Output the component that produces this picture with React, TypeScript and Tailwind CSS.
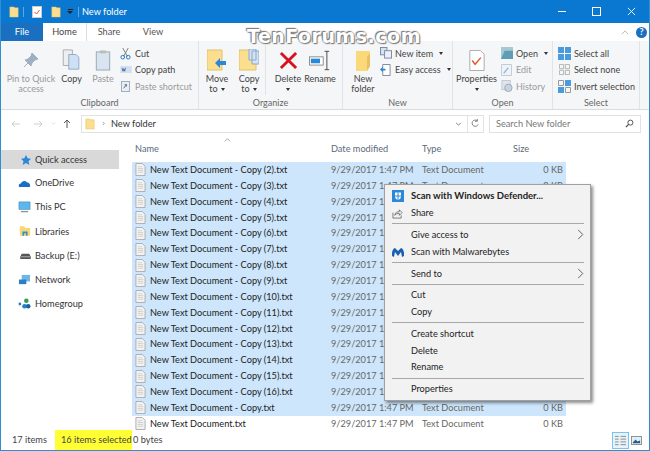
import React from 'react';

const FolderIcon = ({ className }: { className?: string }) => (
  <svg viewBox="0 0 12 14" className={className}>
    <path d="M1 1h5l1 1h4v11H1z" fill="#fbdf8e" stroke="#e3c06a" strokeWidth="0.6" />
  </svg>
);

const DocIcon = () => (
  <svg viewBox="0 0 12 14" className="w-[11px] h-[13px] shrink-0">
    <path d="M1 .5h7l3 3v10H1z" fill="#f4f4f4" stroke="#a9a9a9" />
    <path d="M3 4h5M3 6h6M3 8h6M3 10h6" stroke="#c4c4c4" strokeWidth="0.8" />
  </svg>
);

const Caret = () => <span className="inline-block ml-[3px] align-middle w-0 h-0 border-x-[2px] border-x-transparent border-t-[3px] border-t-[#333]" />;

// large ribbon button: icon on top, one or two lines below
function BigButton({ icon, lines, w, muted, caretBelow }: { icon: React.ReactNode; lines: React.ReactNode[]; w: string; muted?: boolean; caretBelow?: boolean }) {
  return (
    <div className={`flex flex-col items-center shrink-0 ${w} ${muted ? 'text-[#9a9a9a]' : 'text-[#444]'}`}>
      <div className="h-[26px] shrink-0 flex items-end justify-center">{icon}</div>
      <div className="mt-[3px] text-center leading-[10px] whitespace-nowrap">
        {lines.map((l, i) => <div key={i}>{l}</div>)}
        {caretBelow && <div className="-ml-[3px]"><Caret /></div>}
      </div>
    </div>
  );
}

function SmallButton({ icon, label, muted, caret }: { icon: React.ReactNode; label: string; muted?: boolean; caret?: boolean }) {
  return (
    <div className={`flex items-center h-[16.500px] gap-[3px] whitespace-nowrap ${muted ? 'text-[#9a9a9a]' : 'text-[#444]'}`}>
      <span className="w-[13px] h-[13px] flex items-center justify-center shrink-0">{icon}</span>
      {label}
      {caret && <Caret />}
    </div>
  );
}

function Group({ label, w, children }: { label: string; w: string; children: React.ReactNode }) {
  return (
    <div className={`flex flex-col shrink-0 border-r border-[#e1e3e6] h-full ${w}`}>
      <div className="flex-1 flex pt-[4px] min-h-0">{children}</div>
      <div className="h-[12px] text-center text-[#666] leading-[12px]">{label}</div>
    </div>
  );
}

const names = ['(2)', '(3)', '(4)', '(5)', '(6)', '(7)', '(8)', '(9)', '(10)', '(11)', '(12)', '(13)', '(14)', '(15)', '(16)'];
const files = [
  ...names.map((n) => ({ name: `New Text Document - Copy ${n}.txt`, selected: true })),
  { name: 'New Text Document - Copy.txt', selected: true },
  { name: 'New Text Document.txt', selected: false },
];

const navItems: { label: string; icon: React.ReactNode }[] = [
  { label: 'OneDrive', icon: <svg viewBox="0 0 14 10" className="w-[13px] h-[9px]"><path d="M1 9c-1-2 0-4 2-4 1-3 5-4 7-1 2 0 4 2 3 5z" fill="#1a6fc4" /></svg> },
  { label: 'This PC', icon: <svg viewBox="0 0 14 13" className="w-[13px] h-[12px]"><rect x="1" y="1" width="12" height="8" fill="#5cb8ec" stroke="#3d7fa8" strokeWidth="0.6" /><path d="M3 11.500h8" stroke="#8a9aa5" strokeWidth="1.500" /></svg> },
  { label: 'Libraries', icon: <svg viewBox="0 0 14 13" className="w-[12px] h-[12px]"><path d="M1 1h5l1 2h6v9H1z" fill="#f7d774" /><path d="M4 12V7h6v5H8V9H6v3z" fill="#2f8fd8" /></svg> },
  { label: 'Backup (E:)', icon: <svg viewBox="0 0 14 8" className="w-[11px] h-[6px]"><path d="M2 1h10l2 4v3H0V5z" fill="#555" /><path d="M1 5h12" stroke="#ccc" /></svg> },
  { label: 'Network', icon: <svg viewBox="0 0 14 13" className="w-[13px] h-[12px]"><rect x="4" y="1" width="9" height="7" fill="#6fb6e6" /><rect x="1" y="6" width="8" height="5" fill="#2a7fc4" /></svg> },
  { label: 'Homegroup', icon: <svg viewBox="0 0 14 13" className="w-[13px] h-[12px]"><circle cx="2" cy="6.500" r="1.500" fill="#2a7fc4" /><circle cx="9" cy="3" r="2.500" fill="#2e9e5b" /><circle cx="7" cy="9" r="2.500" fill="#2a7fc4" /><circle cx="11" cy="9" r="2.500" fill="#1c5fa8" /></svg> },
];

const MenuSep = () => <div className="h-px bg-[#a8a8a8] ml-[7px] mr-[6px] my-[2.100px]" />;

function MenuItem({ label, bold, icon, sub }: { label: string; bold?: boolean; icon?: React.ReactNode; sub?: boolean }) {
  return (
    <div className={`h-[16.700px] flex items-center text-[#222] whitespace-nowrap ${bold ? 'font-bold text-[9.500px]' : 'text-[9.200px]'}`}>
      <span className="w-[26px] pl-[7px] shrink-0 flex items-center">{icon}</span>
      <span className="flex-1">{label}</span>
      {sub && (
        <svg viewBox="0 0 7 12" className="w-[7px] h-[11px] mr-[6px]"><path d="M1 1l5 5-5 5" fill="none" stroke="#555" /></svg>
      )}
    </div>
  );
}

export default function App() {
  return (
    <div className="relative w-[650px] h-[451px] overflow-hidden bg-white flex flex-col border-x border-b border-[#2f8fd0] text-[9.200px] font-['Lato','Open_Sans',sans-serif] text-[#333]">
      {/* Title bar */}
      <div className="h-[23px] shrink-0 bg-[#0a78d0] flex items-center pl-[8px] text-white">
        <FolderIcon className="w-[10px] h-[12px]" />
        <span className="w-px h-[10px] bg-[#5aa8e4] ml-[4px]" />
        <svg viewBox="0 0 10 12" className="w-[10px] h-[12px] ml-[8px]"><rect x="0.500" y="0.500" width="9" height="11" fill="#fff" stroke="#ccc" /><path d="M2.500 6l2 2 3-4" stroke="#e0592a" fill="none" /></svg>
        <FolderIcon className="w-[10px] h-[12px] ml-[9px]" />
        <span className="ml-[6px] flex flex-col items-center gap-[1px]">
          <span className="w-[5px] h-px bg-[#222]" />
          <span className="w-0 h-0 border-x-[3px] border-x-transparent border-t-[3px] border-t-[#222]" />
        </span>
        <span className="w-px h-[10px] bg-[#5aa8e4] ml-[5px]" />
        <span className="ml-[3px] text-[9.200px]">New folder</span>
        <div className="ml-auto flex items-center">
          <div className="w-[34px] flex justify-center"><span className="w-[8px] h-px bg-white" /></div>
          <div className="w-[34px] flex justify-center"><span className="w-[9px] h-[9px] border border-white" /></div>
          <div className="w-[36px] flex justify-center">
            <svg viewBox="0 0 10 10" className="w-[9px] h-[9px]"><path d="M1 1l8 8M9 1l-8 8" stroke="#fff" strokeWidth="1" /></svg>
          </div>
        </div>
      </div>

      {/* Tabs */}
      <div className="h-[18px] shrink-0 flex items-center bg-white text-[#555] relative">
        <div className="w-[42px] h-full bg-[#1a6fc0] text-white flex items-center justify-center">File</div>
        <div className="w-[44px] h-full flex items-center justify-center border-r border-[#dcdcdc] text-[#444]">Home</div>
        <div className="w-[44px] text-center">Share</div>
        <div className="w-[44px] text-center">View</div>
        <div className="ml-auto flex items-center gap-[7px] pr-[2px]">
          <svg viewBox="0 0 10 6" className="w-[8px] h-[5px]"><path d="M1 5l4-4 4 4" fill="none" stroke="#aaa" /></svg>
          <span className="w-[11px] h-[11px] rounded-full bg-[#1a6fc0] text-white text-[9px] font-bold flex items-center justify-center">?</span>
        </div>
      </div>

      {/* Ribbon */}
      <div className="h-[69px] shrink-0 flex bg-[#f5f6f7] border-b border-[#dadbdc] text-[9px] pr-[10px]">
        <Group label="Clipboard" w="w-[198px]">
          <div className="w-[5px]" />
          <BigButton w="w-[50px]" muted lines={['Pin to Quick', 'access']} icon={<svg viewBox="0 0 16 16" className="w-[16px] h-[16px] mb-[3px]"><path d="M9 1l6 6-3 1-3 3-1 3-6-6 3-1 3-3zM5 11l-4 4" fill="#9fb0c0" stroke="#9fb0c0" /></svg>} />
          <BigButton w="w-[31px]" lines={['Copy']} icon={<svg viewBox="0 0 20 24" className="w-[19px] h-[22px]"><path d="M1 1h10v17H1z" fill="#eee" stroke="#aaa" /><path d="M7 6h8l3 3v13H7z" fill="#cfe0f5" stroke="#8aa9cc" /></svg>} />
          <BigButton w="w-[32px]" muted lines={['Paste']} icon={<svg viewBox="0 0 16 22" className="w-[16px] h-[21px]"><rect x="1" y="2" width="14" height="19" fill="#d8e4f0" stroke="#9aa8b5" /><rect x="5" y="0.500" width="6" height="3" fill="#bbb" /></svg>} />
          <div className="flex flex-col">
            <SmallButton label="Cut" icon={<svg viewBox="0 0 12 14" className="w-[11px] h-[13px]"><path d="M3 1l5 9M9 1L4 10" stroke="#777" /><circle cx="3" cy="11" r="2" fill="none" stroke="#1a6fc0" /><circle cx="9" cy="11" r="2" fill="none" stroke="#1a6fc0" /></svg>} />
            <SmallButton label="Copy path" icon={<svg viewBox="0 0 13 8" className="w-[12px] h-[7px]"><rect width="13" height="8" fill="#cfe0f5" /><path d="M2 2l1 4 1-3 1 3 1-4" stroke="#246" fill="none" strokeWidth="0.700" /></svg>} />
            <SmallButton muted label="Paste shortcut" icon={<svg viewBox="0 0 10 12" className="w-[9px] h-[11px]"><rect x="0.500" y="0.500" width="9" height="11" fill="#e8eef5" stroke="#9aa8b5" /><path d="M3 8l3-4M4 4h2v2" stroke="#567" fill="none" /></svg>} />
          </div>
        </Group>
        <Group label="Organize" w="w-[144px]">
          <div className="w-[1px]" />
          <BigButton w="w-[34px]" lines={['Move', <>to<Caret /></>]} icon={<svg viewBox="0 0 20 22" className="w-[20px] h-[22px]"><path d="M0 1h15v20H0z" fill="#fbdf8e" stroke="#e3c06a" /><path d="M8 14l5-5v3h6v4h-6v3z" fill="#2b88d8" /></svg>} />
          <BigButton w="w-[30px]" lines={['Copy', <>to<Caret /></>]} icon={<svg viewBox="0 0 20 22" className="w-[20px] h-[22px]"><path d="M0 1h17v20H0z" fill="#fbdf8e" stroke="#e3c06a" /><path d="M10 0h7v11h-7zM13 2h7v13h-7z" fill="#d4e2f3" stroke="#8aa9cc" /></svg>} />
          <div className="w-[4px] h-[50px] ml-[1px] border-l border-[#e1e3e6]" />
          <BigButton w="w-[38px]" lines={['Delete']} caretBelow icon={<svg viewBox="0 0 20 20" className="w-[19px] h-[19px] mb-[1px]"><path d="M2 2l16 16M18 2L2 18" stroke="#d8121d" strokeWidth="3" /></svg>} />
          <BigButton w="w-[26px]" lines={['Rename']} icon={<svg viewBox="0 0 24 22" className="w-[22px] h-[21px]"><rect x="0.500" y="7" width="15" height="9" fill="#fff" stroke="#888" /><rect x="2" y="9" width="10" height="5" fill="#2b88d8" /><path d="M17 1h5M19.500 1v20M17 21h5" stroke="#444" /></svg>} />
        </Group>
        <Group label="New" w="w-[110px]">
          <div className="w-[4px]" />
          <BigButton w="w-[32px]" lines={['New', 'folder']} icon={<svg viewBox="0 0 14 20" className="w-[14px] h-[20px]"><path d="M0 0h14v15l-3 5H0z" fill="#fbd978" /><path d="M14 2v13l-3 5V6z" fill="#e8c15c" /></svg>} />
          <div className="flex flex-col">
            <SmallButton caret label="New item" icon={<svg viewBox="0 0 13 13" className="w-[12px] h-[12px]"><rect x="0.500" y="0.500" width="7" height="8" fill="#d4e2f3" stroke="#789" /><rect x="5" y="4" width="7.500" height="8" fill="#eef" stroke="#789" /></svg>} />
            <SmallButton caret label="Easy access" icon={<svg viewBox="0 0 12 13" className="w-[11px] h-[12px]"><path d="M3 .5h8v12H3z" fill="#fff" stroke="#789" /><path d="M0 6l3-3v2h3v2H3v2z" fill="#2b88d8" /></svg>} />
          </div>
        </Group>
        <Group label="Open" w="w-[100px]">
          <BigButton w="w-[47px]" lines={['Properties']} caretBelow icon={<svg viewBox="0 0 16 22" className="w-[16px] h-[21px]"><path d="M.5.500h11l4 4v17H.5z" fill="#fff" stroke="#aaa" /><path d="M3 11l3 4 6-7" fill="none" stroke="#e0592a" strokeWidth="1.500" /></svg>} />
          <div className="flex flex-col">
            <SmallButton caret label="Open" icon={<svg viewBox="0 0 13 13" className="w-[12px] h-[12px]"><rect width="13" height="13" fill="#a9c8d4" /><path d="M0 13l4-9h9v9z" fill="#5f9cb5" /></svg>} />
            <SmallButton muted label="Edit" icon={<svg viewBox="0 0 12 13" className="w-[11px] h-[12px]"><path d="M.5.500h11v12H.5z" fill="#eef3f8" stroke="#bcc8d4" /><path d="M3 10l5-6" stroke="#9cbad6" strokeWidth="1.500" /></svg>} />
            <SmallButton muted label="History" icon={<svg viewBox="0 0 13 13" className="w-[12px] h-[12px]"><rect x="1" y="0.500" width="9" height="10" fill="#dfe5ec" stroke="#bcc8d4" /><circle cx="8" cy="8.500" r="4" fill="#c7d3de" stroke="#9aa8b5" /></svg>} />
          </div>
        </Group>
        <Group label="Select" w="w-[87px]">
          <div className="flex flex-col pl-[5px]">
            <SmallButton label="Select all" icon={<svg viewBox="0 0 13 13" className="w-[13px] h-[13px]"><path d="M0 0h6v6H0zM7 0h6v6H7zM0 7h6v6H0zM7 7h6v6H7z" fill="#4a9ade" /></svg>} />
            <SmallButton label="Select none" icon={<svg viewBox="0 0 13 13" className="w-[11px] h-[11px]"><path d="M.5.500h5v5h-5zM7.500.500h5v5h-5zM.5 7.500h5v5h-5zM7.500 7.500h5v5h-5z" fill="none" stroke="#aaa" /></svg>} />
            <SmallButton label="Invert selection" icon={<svg viewBox="0 0 13 13" className="w-[13px] h-[13px]"><path d="M7 0h6v6H7zM0 7h6v6H0z" fill="#4a9ade" /><path d="M.5.500h5v5h-5zM7.500 7.500h5v5h-5z" fill="none" stroke="#999" /></svg>} />
          </div>
        </Group>
      </div>

      {/* Address bar */}
      <div className="h-[25px] shrink-0 flex items-center pt-[2px]">
        <div className="w-[80px] shrink-0 flex items-center pl-[10px] text-[#c8c8c8]">
          <svg viewBox="0 0 10 10" className="w-[10px] h-[10px]"><path d="M9 5H1M4 2L1 5l3 3" fill="none" stroke="#cfcfcf" /></svg>
          <svg viewBox="0 0 10 10" className="w-[10px] h-[10px] ml-[12px]"><path d="M1 5h8M6 2l3 3-3 3" fill="none" stroke="#cfcfcf" /></svg>
          <svg viewBox="0 0 6 4" className="w-[5px] h-[3px] ml-[8px]"><path d="M1 1l2 2 2-2" fill="none" stroke="#cfcfcf" /></svg>
          <svg viewBox="0 0 10 10" className="w-[10px] h-[10px] ml-[6px]"><path d="M5 9V1M2 4l3-3 3 3" fill="none" stroke="#555" /></svg>
        </div>
        <div className="w-[403px] shrink-0 h-[18px] border border-[#e2e2e2] flex items-center pl-[3px] text-[#333]">
          <FolderIcon className="w-[10px] h-[12px]" />
          <svg viewBox="0 0 4 6" className="w-[3px] h-[5px] ml-[7px]"><path d="M1 1l2 2-2 2" fill="none" stroke="#777" /></svg>
          <span className="ml-[6px]">New folder</span>
          <svg viewBox="0 0 8 5" className="ml-auto w-[7px] h-[4px]"><path d="M1 1l3 3 3-3" fill="none" stroke="#666" /></svg>
          <span className="ml-[5px] w-px h-full bg-[#e2e2e2]" />
          <svg viewBox="0 0 10 10" className="w-[9px] h-[9px] mx-[3px]"><path d="M8 6a3.500 3.500 0 1 1-1-4M7 0v2.500H4.500" fill="none" stroke="#777" /></svg>
        </div>
        <div className="ml-[5px] w-[152px] h-[18px] border border-[#e2e2e2] flex items-center pl-[6px] pr-[6px] text-[#777]">
          Search New folder
          <svg viewBox="0 0 10 10" className="ml-auto w-[9px] h-[9px]"><circle cx="6" cy="4" r="2.800" fill="none" stroke="#444" /><path d="M4 6L1 9" stroke="#444" strokeWidth="1.300" /></svg>
        </div>
      </div>

      {/* Main */}
      <div className="flex-1 flex min-h-0">
        <div className="w-[131px] shrink-0 pt-[15px] pr-[13px]">
          <div className="h-[19px] bg-[#d9d9d9] flex items-center text-[#333]">
            <span className="w-[34px] flex justify-end pr-[4px]">
              <svg viewBox="0 0 12 12" className="w-[10px] h-[10px]"><path d="M6 0l2 4 4 .5-3 3 1 4.500-4-2.500L2 12l1-4.500-3-3L4 4z" fill="#2b88d8" /></svg>
            </span>
            Quick access
          </div>
          <div className="mt-[2px]">
            {navItems.map((n) => (
              <div key={n.label} className="h-[24.200px] flex items-center text-[#333]">
                <span className="w-[34px] flex justify-end pr-[4px] shrink-0">{n.icon}</span>
                {n.label}
              </div>
            ))}
          </div>
        </div>
        <div className="flex-1 min-w-0 flex flex-col">
          <div className="h-[27px] shrink-0 flex items-center text-[#5a6a7a] relative">
            <span className="w-[199px] pl-[3px]">Name</span>
            <span className="w-[91px]">Date modified</span>
            <span className="w-[91px]">Type</span>
            <span>Size</span>
            <svg viewBox="0 0 8 4" className="absolute left-[92px] top-[3px] w-[7px] h-[4px]"><path d="M1 3.500l3-3 3 3" fill="none" stroke="#999" /></svg>
          </div>
          <div className="flex flex-col">
            {files.map((f) => (
              <div key={f.name} className={`h-[15.870px] w-[434px] flex items-center shrink-0 ${f.selected ? 'bg-[#cde6fb]' : ''}`}>
                <span className="w-[18px] pl-[3px] flex shrink-0"><DocIcon /></span>
                <span className="w-[181px] text-[#222] whitespace-nowrap">{f.name}</span>
                <span className="w-[91px] text-[#666] whitespace-nowrap">9/29/2017 1:47 PM</span>
                <span className="w-[91px] text-[#666] whitespace-nowrap">Text Document</span>
                <span className="flex-1 text-right pr-[3px] text-[#666]">0 KB</span>
              </div>
            ))}
          </div>
        </div>
      </div>

      {/* Status bar */}
      <div className="h-[20px] shrink-0 flex items-center text-[#444] pr-[7px]">
        <span className="w-[54px] pl-[11px]">17 items</span>
        <span className="w-[77px] h-full bg-[#ffff33] flex items-center pl-[6px] whitespace-nowrap">16 items selected</span>
        <span className="ml-[1px]">0 bytes</span>
        <div className="ml-auto flex items-center gap-[2px]">
          <span className="w-[17px] h-[17px] border border-[#7cc4f0] bg-[#e5f3fb] flex items-center justify-center">
            <svg viewBox="0 0 12 12" className="w-[11px] h-[11px]"><path d="M0 1.500h4M6 1.500h6M0 4.500h4M6 4.500h6M0 7.500h4M6 7.500h6M0 10.500h4M6 10.500h6" stroke="#888" /></svg>
          </span>
          <svg viewBox="0 0 12 10" className="w-[11px] h-[9px]"><rect x="0.500" y="0.500" width="11" height="9" fill="#dff0fb" stroke="#888" /><path d="M2 7l3-3 2 2 3-1v3H2z" fill="#2a5a8a" /></svg>
        </div>
      </div>

      {/* Watermark */}
      <div className="absolute left-[246px] top-[24px] text-[19px] leading-[24px] font-bold tracking-[0.5px] text-white font-['DejaVu_Sans',sans-serif] [text-shadow:0_0_2px_#777,1px_1px_1px_#777,-1px_-1px_1px_#777]">TenForums.com</div>

      {/* Context menu */}
      <div className="absolute left-[383px] top-[184px] w-[207px] h-[217px] bg-[#f2f2f2] border border-[#a0a0a0] shadow-[2px_2px_3px_rgba(0,0,0,0.45)] pt-[3px]">
        <MenuItem bold label="Scan with Windows Defender..." icon={<svg viewBox="0 0 12 12" className="w-[12px] h-[12px]"><rect width="12" height="12" fill="#2b88d8" /><path d="M3 2.500h6v4c0 2-1.500 3-3 3.500-1.500-.5-3-1.500-3-3.500z" fill="#fff" /><path d="M6 2.500v7.500M3 6h6" stroke="#2b88d8" /></svg>} />
        <MenuItem label="Share" icon={<svg viewBox="0 0 12 12" className="w-[11px] h-[11px]"><path d="M1 5v6h9V8M3 8c0-3 3-4 5-4V2l3 3-3 3V6c-2 0-4 0-5 2z" fill="none" stroke="#555" strokeWidth="0.800" /></svg>} />
        <MenuSep />
        <MenuItem label="Give access to" sub />
        <MenuItem label="Scan with Malwarebytes" icon={<svg viewBox="0 0 12 10" className="w-[12px] h-[10px]"><path d="M0 9c-.5-4 1-8 3-8l3 3 3-3c2 0 3.500 4 3 8l-2 1-1-5-3 4-3-4-1 5z" fill="#1a5fb0" /></svg>} />
        <MenuSep />
        <MenuItem label="Send to" sub />
        <MenuSep />
        <MenuItem label="Cut" />
        <MenuItem label="Copy" />
        <MenuSep />
        <MenuItem label="Create shortcut" />
        <MenuItem label="Delete" />
        <MenuItem label="Rename" />
        <MenuSep />
        <MenuItem label="Properties" />
      </div>
    </div>
  );
}
